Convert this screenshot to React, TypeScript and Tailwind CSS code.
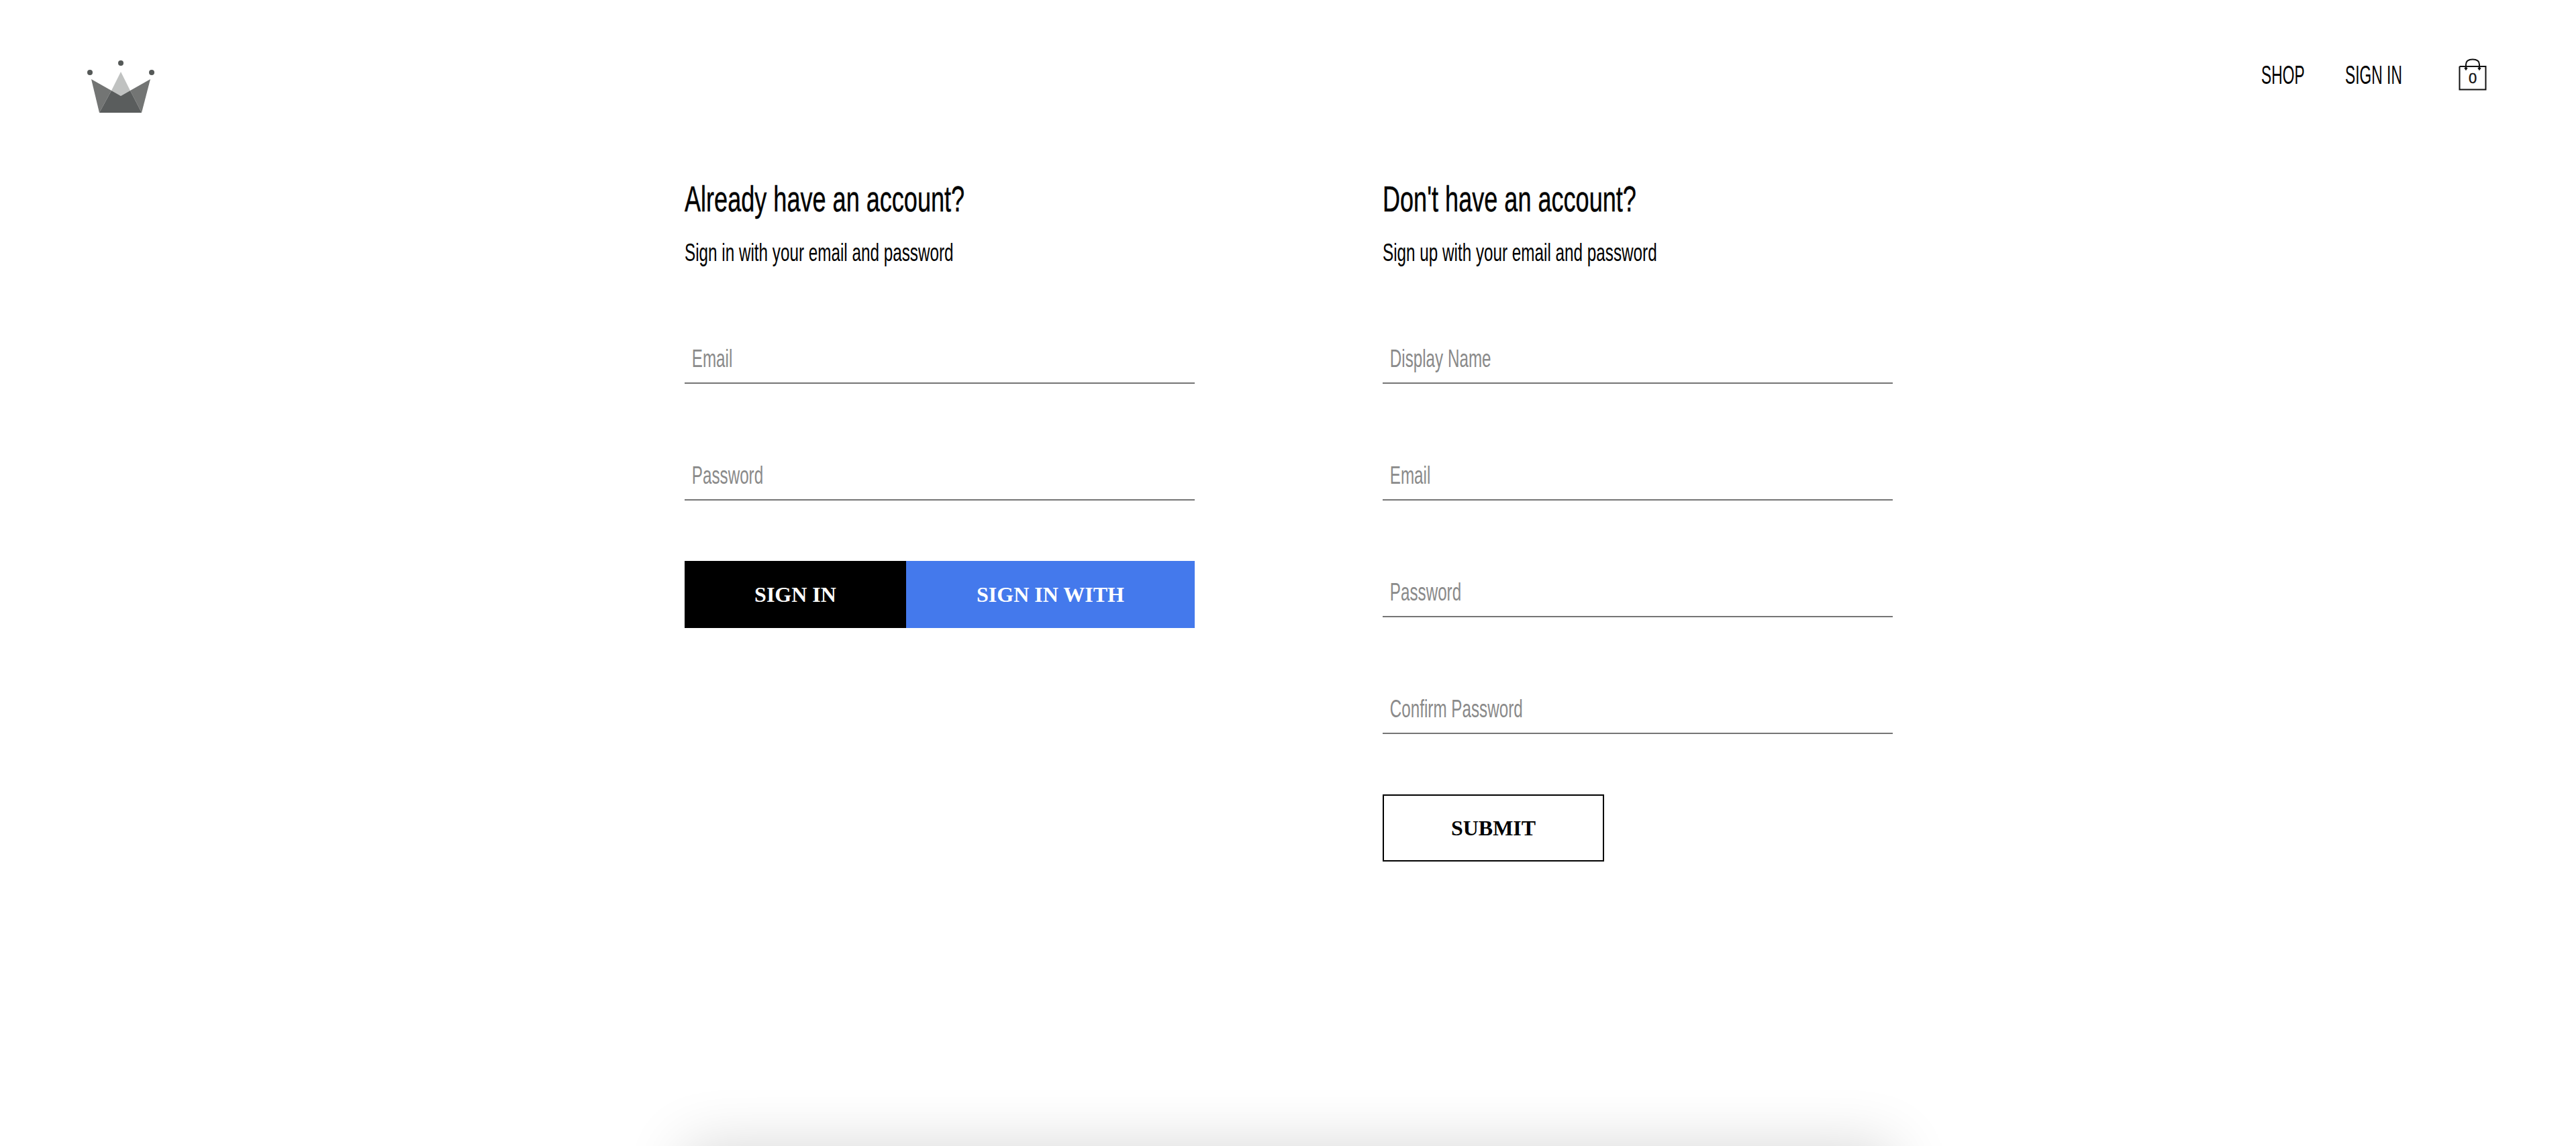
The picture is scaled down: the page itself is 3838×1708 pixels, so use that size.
import type { ReactNode } from "react";

const narrow = "font-['Liberation_Sans_Narrow','Liberation_Sans',sans-serif]";
const serif = "font-['Liberation_Serif',serif]";

function CrownLogo() {
  return (
    <svg width="220" height="130" viewBox="0 0 220 130" className="block">
      <polygon points="100,47 86,75 100,83 114,75" fill="#c0c2c1" />
      <polygon points="56,58 68,108 86,75" fill="#737574" />
      <polygon points="144,58 131,108 114,75" fill="#737574" />
      <polygon points="68,108 86,75 100,83 114,75 131,108" fill="#5a5d5d" />
      <circle cx="54" cy="48" r="4" fill="#555958" />
      <circle cx="100" cy="34" r="4" fill="#555958" />
      <circle cx="146" cy="48" r="4" fill="#555958" />
    </svg>
  );
}

function BagIcon() {
  return (
    <div className="relative h-[48px] w-[42px]">
      <svg width="42" height="48" viewBox="0 0 42 48" fill="none" stroke="#111" className="block">
        <path d="M1.5 12 V46.5 H40.5 V12 H1.5" strokeWidth="2" />
        <path d="M11 16 V9 C11 3 15 1.5 21 1.5 C27 1.5 31 3 31 9 V16" strokeWidth="2" />
        <path d="M9 14 L11 17 L13 14 M29 14 L31 17 L33 14" strokeWidth="1.5" />
      </svg>
      <span className={`absolute inset-x-0 top-[19px] text-center text-[22px] leading-[22px] text-[#111] [-webkit-text-stroke:0.4px_#111] ${narrow}`}>
        0
      </span>
    </div>
  );
}

function Squeezed({ children, className }: { children: ReactNode; className: string }) {
  return <span className={`inline-block origin-left whitespace-nowrap ${className}`}>{children}</span>;
}

function Field({ placeholder }: { placeholder: string }) {
  return (
    <div className="h-[60px] border-b-2 border-[#757575]">
      <input
        placeholder={placeholder}
        className={`h-[46px] w-full origin-left scale-x-[0.673] bg-transparent pl-[16px] text-[36px] outline-none placeholder:text-[#8a8a8a] ${narrow}`}
      />
    </div>
  );
}

function Heading({ title, sub }: { title: string; sub: string }) {
  return (
    <div className={`text-black ${narrow}`}>
      <h2 className="-mt-[2px] h-[64px] text-[54px] leading-[64px] font-normal [-webkit-text-stroke:0.5px_black]">
        <Squeezed className="scale-x-[0.668]">{title}</Squeezed>
      </h2>
      <p className="mt-[29px] h-[40px] text-[36px] leading-[40px]">
        <Squeezed className="scale-x-[0.674]">{sub}</Squeezed>
      </p>
    </div>
  );
}

export default function App() {
  return (
    <div className="h-[1708px] overflow-hidden bg-white">
      <div className="h-[1708px]">
        <header className="flex h-[190px] justify-between">
          <div className="pt-[60px] pl-[80px]">
            <CrownLogo />
          </div>
          <nav className="flex items-start pt-[87px] pr-[133px]">
            <a className={`mt-[2px] w-[125px] text-[38px] leading-[46px] text-black ${narrow}`}>
              <Squeezed className="scale-x-[0.6]">SHOP</Squeezed>
            </a>
            <a className={`mt-[2px] w-[169px] text-[38px] leading-[46px] text-black ${narrow}`}>
              <Squeezed className="scale-x-[0.6]">SIGN IN</Squeezed>
            </a>
            <BagIcon />
          </nav>
        </header>

        <main className="ml-[1020px] flex w-[1800px] justify-between pt-[76px]">
          <section className="w-[760px]">
            <Heading title="Already have an account?" sub="Sign in with your email and password" />
            <div className="mt-[115px] flex flex-col gap-[114px]">
              <Field placeholder="Email" />
              <Field placeholder="Password" />
            </div>
            <div className={`mt-[90px] flex h-[100px] text-[32px] font-bold text-white ${serif}`}>
              <button className="w-[330px] bg-black uppercase">Sign in</button>
              <button className="w-[430px] bg-[#4479ec] uppercase">Sign in with</button>
            </div>
          </section>

          <section className="w-[760px]">
            <Heading title="Don't have an account?" sub="Sign up with your email and password" />
            <div className="mt-[115px] flex flex-col gap-[114px]">
              <Field placeholder="Display Name" />
              <Field placeholder="Email" />
              <Field placeholder="Password" />
              <Field placeholder="Confirm Password" />
            </div>
            <button className={`mt-[90px] h-[100px] w-[330px] border-2 border-black bg-white text-[32px] font-bold text-black uppercase ${serif}`}>
              Submit
            </button>
          </section>
        </main>
      </div>
      <div className="ml-[1020px] h-[200px] w-[1800px] shadow-[0_0_90px_rgba(0,0,0,0.16)]" />
    </div>
  );
}
